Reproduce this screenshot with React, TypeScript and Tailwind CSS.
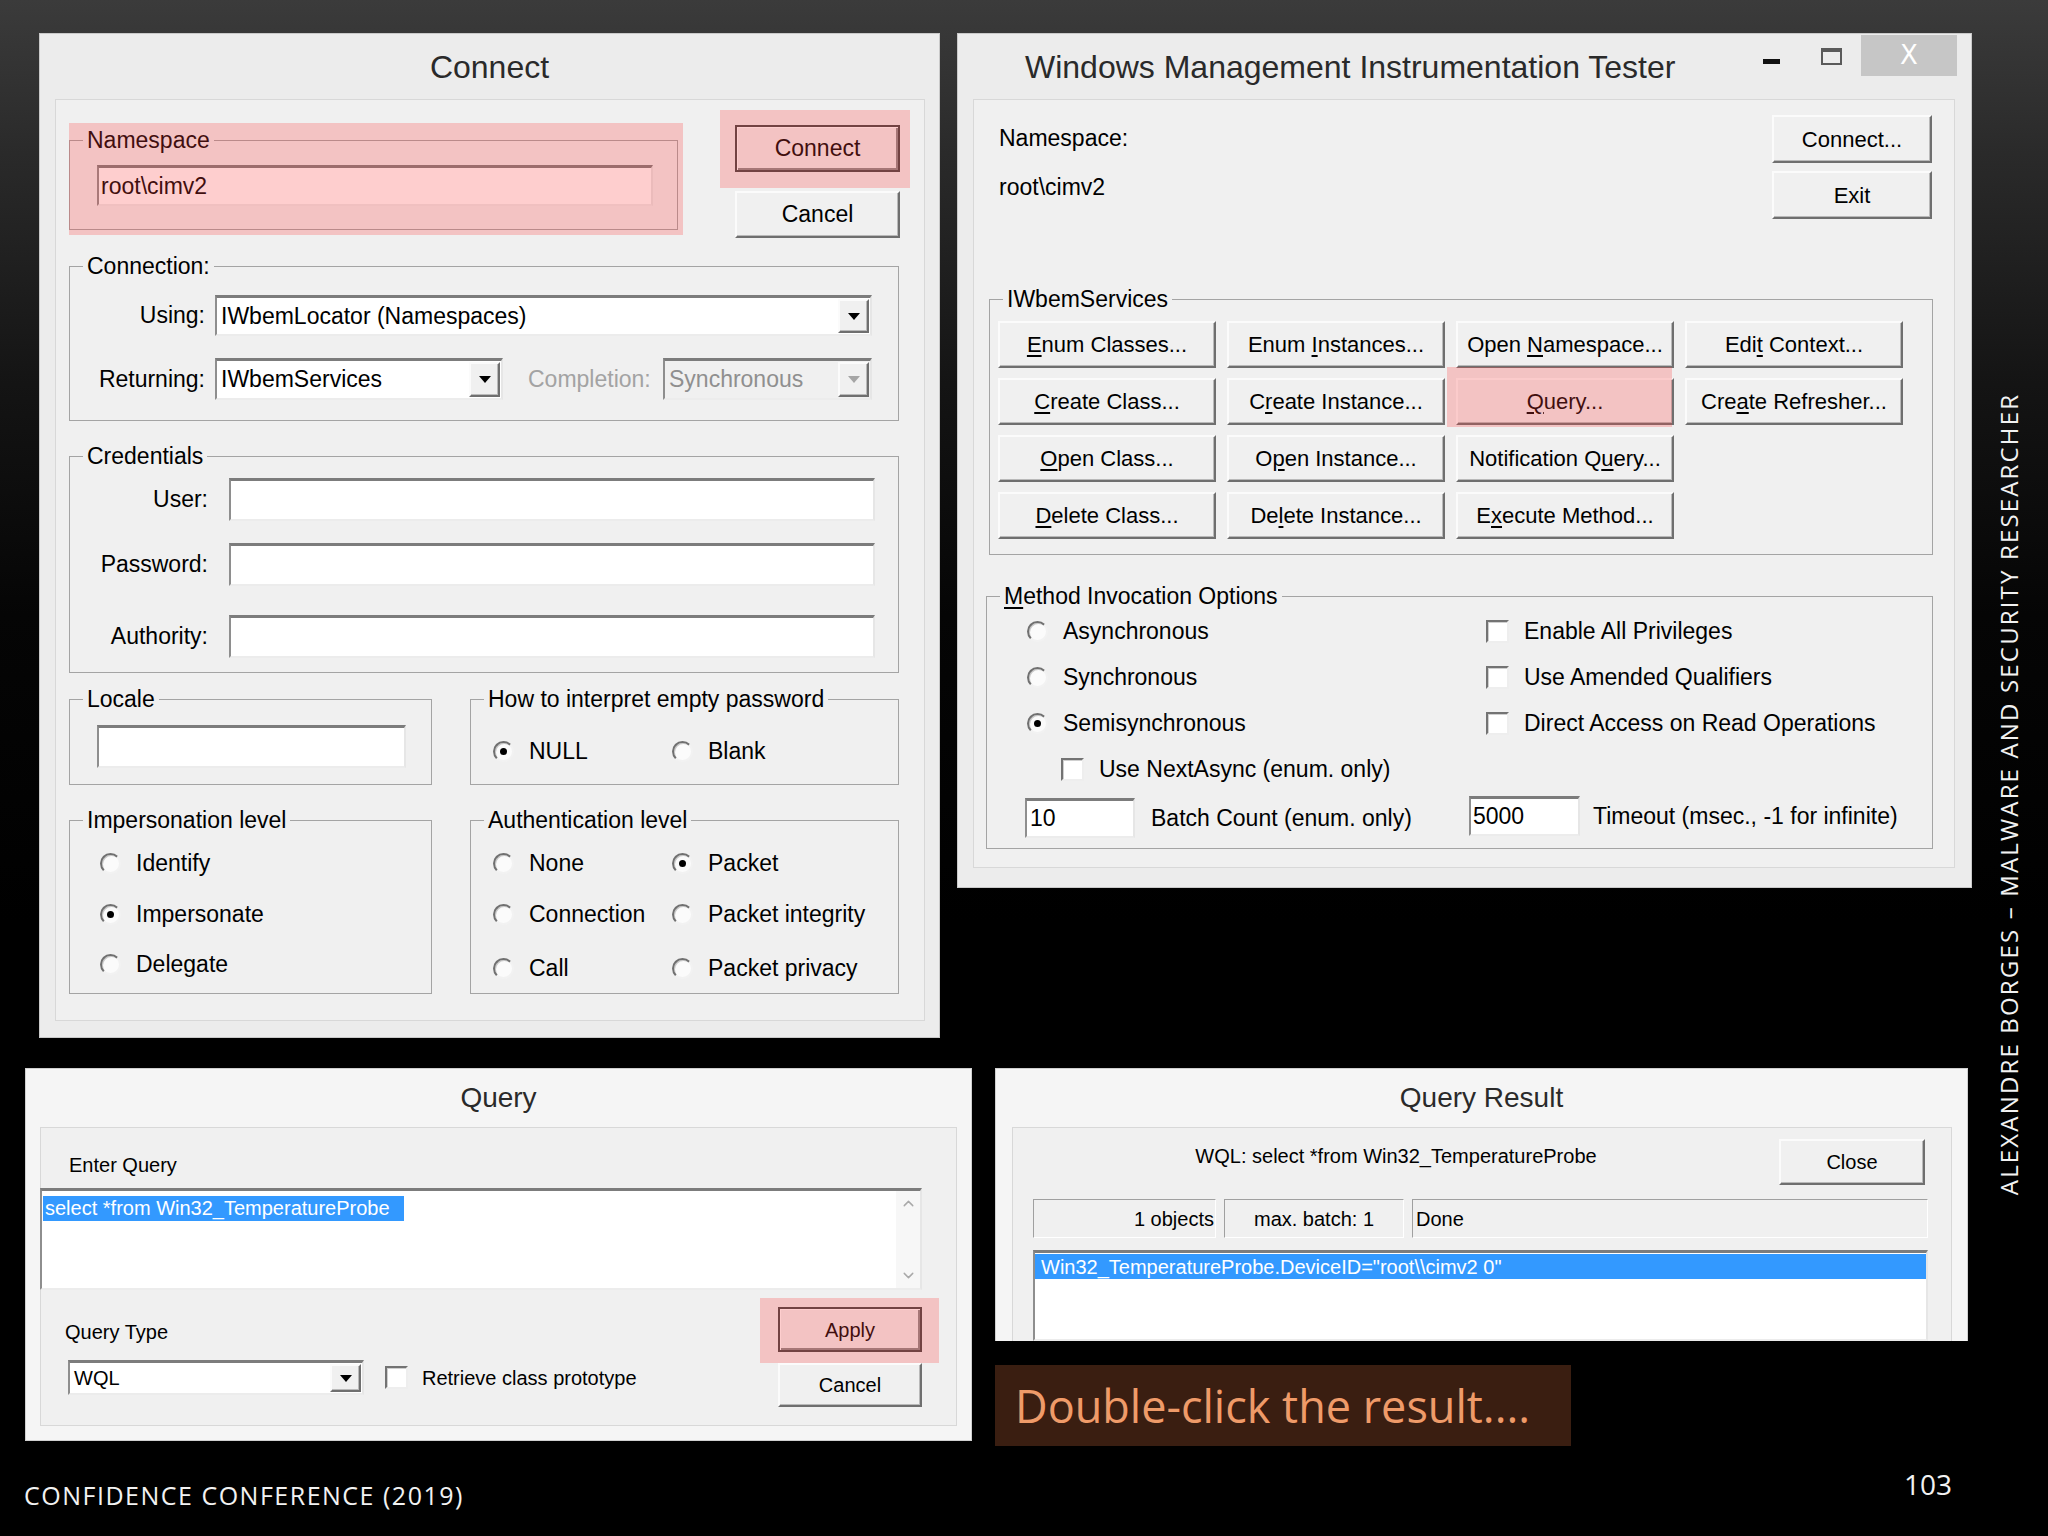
import React from "react";
import { ChevronUp, ChevronDown } from "lucide-react";

type P = { className?: string; children?: React.ReactNode };

function Raised({ className = "", children, def = false }: P & { def?: boolean }) {
  return (
    <div
      className={`flex items-center justify-center bg-[#f0f0f0] border-2 ${
        def
          ? "border-[#444444] shadow-[inset_1px_1px_0_#ffffff,inset_-2px_-2px_0_#8a8a8a]"
          : "border-t-[#fbfbfb] border-l-[#fbfbfb] border-r-[#6f6f6f] border-b-[#6f6f6f] shadow-[inset_-1px_-1px_0_#b9b9b9]"
      } ${className}`}
    >
      {children}
    </div>
  );
}

function Sunken({ className = "", children, bg = "bg-white" }: P & { bg?: string }) {
  return (
    <div
      className={`border-t-[3px] border-l-2 border-r-2 border-b-2 border-t-[#7c7c7c] border-l-[#8e8e8e] border-r-[#e6e6e6] border-b-[#ececec] ${bg} ${className}`}
    >
      {children}
    </div>
  );
}

function Combo({ text, className = "", disabled = false }: { text: string; className?: string; disabled?: boolean }) {
  return (
    <Sunken bg={disabled ? "bg-[#f0f0f0]" : "bg-white"} className={`flex items-stretch ${className}`}>
      <div className={`flex-1 flex items-center pl-[4px] whitespace-nowrap overflow-hidden ${disabled ? "text-[#8f8f8f]" : ""}`}>
        {text}
      </div>
      <Raised className="w-[31px] my-[1px] mr-[1px]">
        <span
          className={`w-0 h-0 border-l-[6px] border-r-[6px] border-t-[7px] border-l-transparent border-r-transparent ${
            disabled ? "border-t-[#a5a5a5]" : "border-t-black"
          }`}
        />
      </Raised>
    </Sunken>
  );
}

function Group({ label, className = "", children }: P & { label: React.ReactNode }) {
  return (
    <fieldset className={`border border-[#a4a4a4] min-w-0 ${className}`}>
      <legend className="ml-[13px] px-[4px] leading-[26px]">{label}</legend>
      {children}
    </fieldset>
  );
}

function Radio({ checked = false }: { checked?: boolean }) {
  return (
    <span className="flex w-[21px] h-[21px] -ml-[1px] shrink-0 items-center justify-center rounded-full bg-[#fbfbfb] border-2 border-t-[#707070] border-l-[#707070] border-r-[#f2f2f2] border-b-[#f2f2f2] shadow-[inset_1px_1px_0_#c9c9c9]">
      {checked ? <span className="w-[7px] h-[7px] rounded-full bg-black" /> : null}
    </span>
  );
}

function Check() {
  return (
    <span className="block w-[23px] h-[23px] -my-[1px] shrink-0 bg-white border-2 border-t-[#737373] border-l-[#737373] border-r-[#eeeeee] border-b-[#eeeeee] shadow-[inset_1px_1px_0_#cfcfcf]" />
  );
}

function RItem({ label, checked = false }: { label: string; checked?: boolean }) {
  return (
    <div className="flex items-center h-[26px] whitespace-nowrap">
      <Radio checked={checked} />
      <span className="ml-[15px]">{label}</span>
    </div>
  );
}

function CItem({ label }: { label: string }) {
  return (
    <div className="flex items-center h-[26px] whitespace-nowrap">
      <Check />
      <span className="ml-[15px]">{label}</span>
    </div>
  );
}

function Hl({ className = "" }: { className?: string }) {
  return <div className={`absolute pointer-events-none bg-[rgba(252,60,60,0.25)] ${className}`} />;
}

function U({ c }: { c: string }) {
  return <span className="underline underline-offset-[3px]">{c}</span>;
}

function ConnectDialog() {
  return (
    <div className="absolute left-[39px] top-[33px] w-[901px] h-[1005px] bg-[#ececec] border border-[#c9c9c9] flex flex-col text-[23px] text-black">
      <div className="h-[65px] shrink-0 flex items-center justify-center text-[32px] text-[#2a2a2a]">Connect</div>
      <div className="ml-[15px] mr-[14px] mb-[16px] flex-1 bg-[#f0f0f0] border border-[#d8d8d8] pl-[13px] pt-[10px] flex flex-col">
        <div className="flex items-start">
          <div className="relative mt-[17px] w-[609px]">
            <Group label="Namespace" className="h-[103px] w-[609px]">
              <Sunken className="mt-[12px] ml-[27px] w-[556px] h-[41px] flex items-center pl-[2px]">root\cimv2</Sunken>
            </Group>
            <Hl className="-top-[4px] left-0 -right-[5px] -bottom-[5px]" />
          </div>
          <div className="ml-[57px] mt-[15px] flex flex-col">
            <div className="relative">
              <Raised def className="w-[165px] h-[47px]">Connect</Raised>
              <Hl className="-top-[15px] -left-[15px] -right-[10px] -bottom-[16px]" />
            </div>
            <Raised className="mt-[19px] w-[165px] h-[47px]">Cancel</Raised>
          </div>
        </div>

        <Group label="Connection:" className="mt-[15px] w-[830px] h-[168px]">
          <div className="mt-[16px] flex items-center">
            <div className="w-[135px] text-right">Using:</div>
            <Combo className="ml-[10px] w-[657px] h-[41px]" text="IWbemLocator (Namespaces)" />
          </div>
          <div className="mt-[22px] flex items-center">
            <div className="w-[135px] text-right">Returning:</div>
            <Combo className="ml-[10px] w-[288px] h-[42px]" text="IWbemServices" />
            <div className="ml-[25px] w-[135px] text-[#a3a3a3] whitespace-nowrap">Completion:</div>
            <Combo disabled className="w-[209px] h-[42px]" text="Synchronous" />
          </div>
        </Group>

        <Group label="Credentials" className="mt-[22px] w-[830px] h-[230px]">
          <div className="mt-[9px] flex items-center">
            <div className="w-[138px] text-right">User:</div>
            <Sunken className="ml-[21px] w-[646px] h-[43px]" />
          </div>
          <div className="mt-[22px] flex items-center">
            <div className="w-[138px] text-right">Password:</div>
            <Sunken className="ml-[21px] w-[646px] h-[43px]" />
          </div>
          <div className="mt-[29px] flex items-center">
            <div className="w-[138px] text-right">Authority:</div>
            <Sunken className="ml-[21px] w-[646px] h-[43px]" />
          </div>
        </Group>

        <div className="mt-[13px] flex gap-[38px]">
          <Group label="Locale" className="w-[363px] h-[99px]">
            <Sunken className="mt-[13px] ml-[27px] w-[309px] h-[43px]" />
          </Group>
          <Group label="How to interpret empty password" className="w-[429px] h-[99px]">
            <div className="mt-[26px] ml-[23px] grid grid-cols-[179px_auto]">
              <RItem label="NULL" checked />
              <RItem label="Blank" />
            </div>
          </Group>
        </div>

        <div className="mt-[22px] flex gap-[38px]">
          <Group label="Impersonation level" className="w-[363px] h-[187px]">
            <div className="mt-[17px] ml-[31px] flex flex-col">
              <RItem label="Identify" />
              <div className="mt-[25px]">
                <RItem label="Impersonate" checked />
              </div>
              <div className="mt-[24px]">
                <RItem label="Delegate" />
              </div>
            </div>
          </Group>
          <Group label="Authentication level" className="w-[429px] h-[187px]">
            <div className="mt-[17px] ml-[23px] flex flex-col">
              <div className="grid grid-cols-[179px_auto]">
                <RItem label="None" />
                <RItem label="Packet" checked />
              </div>
              <div className="mt-[25px] grid grid-cols-[139px_auto]">
                <RItem label="Connection" />
                <div className="ml-[40px]">
                  <RItem label="Packet integrity" />
                </div>
              </div>
              <div className="mt-[28px] grid grid-cols-[179px_auto]">
                <RItem label="Call" />
                <RItem label="Packet privacy" />
              </div>
            </div>
          </Group>
        </div>
      </div>
    </div>
  );
}

function WmiDialog() {
  const btn = "w-[218px] h-[47px] text-[22px] whitespace-nowrap";
  return (
    <div className="absolute left-[957px] top-[33px] w-[1015px] h-[855px] bg-[#ececec] border border-[#c9c9c9] flex flex-col text-[23px] text-black">
      <div className="h-[65px] shrink-0 flex items-start">
        <div className="self-center pl-[67px] text-[32px] text-[#2a2a2a] whitespace-nowrap">
          Windows Management Instrumentation Tester
        </div>
        <div className="ml-auto mt-[25px] w-[17px] h-[5px] bg-[#111111]" />
        <div className="ml-[41px] mt-[14px] w-[21px] h-[17px] border-2 border-t-[4px] border-[#5a5a5a]" />
        <div className="ml-[19px] mt-[1px] mr-[14px] w-[96px] h-[41px] bg-[#c6c6c6] flex items-center justify-center text-white text-[26px] font-['DejaVu_Sans',sans-serif]">
          X
        </div>
      </div>
      <div className="ml-[15px] mr-[16px] mb-[19px] flex-1 bg-[#f0f0f0] border border-[#d8d8d8] flex flex-col">
        <div className="pt-[15px] flex justify-between">
          <div className="pl-[25px] flex flex-col">
            <div className="mt-[10px] leading-[26px]">Namespace:</div>
            <div className="mt-[23px] leading-[26px]">root\cimv2</div>
          </div>
          <div className="mr-[22px] flex flex-col">
            <Raised className="w-[160px] h-[48px] text-[22px]">Connect...</Raised>
            <Raised className="mt-[8px] w-[160px] h-[48px] text-[22px]">Exit</Raised>
          </div>
        </div>

        <Group label="IWbemServices" className="mt-[67px] ml-[15px] w-[944px] h-[269px]">
          <div className="mt-[9px] ml-[8px] grid grid-cols-[218px_218px_218px_218px] gap-x-[11px] gap-y-[10px]">
            <Raised className={btn}><span><U c="E" />num Classes...</span></Raised>
            <Raised className={btn}><span>Enum <U c="I" />nstances...</span></Raised>
            <Raised className={btn}><span>Open <U c="N" />amespace...</span></Raised>
            <Raised className={btn}><span>Edi<U c="t" /> Context...</span></Raised>
            <Raised className={btn}><span><U c="C" />reate Class...</span></Raised>
            <Raised className={btn}><span>C<U c="r" />eate Instance...</span></Raised>
            <div className="relative">
              <Raised className={btn}><span><U c="Q" />uery...</span></Raised>
              <Hl className="-top-[11px] -left-[9px] right-[2px] -bottom-[2px]" />
            </div>
            <Raised className={btn}><span>Cre<U c="a" />te Refresher...</span></Raised>
            <Raised className={btn}><span><U c="O" />pen Class...</span></Raised>
            <Raised className={btn}><span>O<U c="p" />en Instance...</span></Raised>
            <Raised className={btn}><span>Notification Q<U c="u" />ery...</span></Raised>
            <div />
            <Raised className={btn}><span><U c="D" />elete Class...</span></Raised>
            <Raised className={btn}><span>De<U c="l" />ete Instance...</span></Raised>
            <Raised className={btn}><span>E<U c="x" />ecute Method...</span></Raised>
            <div />
          </div>
        </Group>

        <Group
          label={
            <span>
              <U c="M" />ethod Invocation Options
            </span>
          }
          className="mt-[28px] ml-[12px] w-[947px] h-[266px]"
        >
          <div className="mt-[9px] pl-[41px] flex flex-col gap-[20px]">
            <div className="grid grid-cols-[458px_auto]">
              <RItem label="Asynchronous" />
              <CItem label="Enable All Privileges" />
            </div>
            <div className="grid grid-cols-[458px_auto]">
              <RItem label="Synchronous" />
              <CItem label="Use Amended Qualifiers" />
            </div>
            <div className="grid grid-cols-[458px_auto]">
              <RItem label="Semisynchronous" checked />
              <CItem label="Direct Access on Read Operations" />
            </div>
            <div className="ml-[33px]">
              <CItem label="Use NextAsync (enum. only)" />
            </div>
          </div>
          <div className="mt-[14px] ml-[38px] flex items-start">
            <div className="w-[444px] mt-[2px] flex items-center">
              <Sunken className="w-[110px] h-[40px] flex items-center pl-[3px]">10</Sunken>
              <span className="ml-[16px] whitespace-nowrap">Batch Count (enum. only)</span>
            </div>
            <div className="flex items-center">
              <Sunken className="w-[111px] h-[40px] flex items-center pl-[2px]">5000</Sunken>
              <span className="ml-[13px] whitespace-nowrap">Timeout (msec., -1 for infinite)</span>
            </div>
          </div>
        </Group>
      </div>
    </div>
  );
}

function QueryDialog() {
  return (
    <div className="absolute left-[25px] top-[1068px] w-[947px] h-[373px] bg-[#f5f5f5] border border-[#d0d0d0] flex flex-col text-[20px] text-black">
      <div className="h-[58px] shrink-0 flex items-center justify-center text-[28px] text-[#2a2a2a]">Query</div>
      <div className="mx-[14px] mb-[14px] flex-1 bg-[#f0f0f0] border border-[#d8d8d8] flex flex-col">
        <div className="pt-[25px] pl-[28px] leading-[24px]">Enter Query</div>
        <Sunken className="mt-[11px] -ml-[1px] w-[882px] h-[102px] flex">
          <div className="flex-1 pt-[2px] pl-[1px]">
            <span className="bg-[#3399ff] text-white pl-[2px] pr-[14px] leading-[25px] inline-block">select *from Win32_TemperatureProbe</span>
          </div>
          <div className="w-[24px] bg-[#f7f7f7] flex flex-col items-center justify-between py-[4px]">
            <ChevronUp size={17} strokeWidth={2} className="text-[#a9a9a9]" />
            <ChevronDown size={17} strokeWidth={2} className="text-[#a9a9a9]" />
          </div>
        </Sunken>
        <div className="mt-[8px] flex">
          <div className="pl-[24px] flex flex-col">
            <div className="mt-[22px] leading-[24px]">Query Type</div>
            <div className="mt-[16px] flex items-center">
              <Combo className="ml-[3px] w-[296px] h-[35px]" text="WQL" />
              <div className="ml-[21px] flex items-center">
                <Check />
                <span className="ml-[14px] whitespace-nowrap">Retrieve class prototype</span>
              </div>
            </div>
          </div>
          <div className="ml-auto mr-[34px] flex flex-col">
            <div className="relative mt-[9px]">
              <Raised def className="w-[144px] h-[45px]">Apply</Raised>
              <Hl className="-top-[9px] -left-[18px] -right-[17px] -bottom-[11px]" />
            </div>
            <Raised className="mt-[11px] w-[144px] h-[44px]">Cancel</Raised>
          </div>
        </div>
      </div>
    </div>
  );
}

function ResultDialog() {
  return (
    <div className="absolute left-[995px] top-[1068px] w-[973px] h-[273px] bg-[#f5f5f5] border-t border-l border-r border-[#d0d0d0] flex flex-col text-[20px] text-black overflow-hidden">
      <div className="h-[58px] shrink-0 flex items-center justify-center text-[28px] text-[#2a2a2a]">Query Result</div>
      <div className="ml-[16px] mr-[15px] flex-1 bg-[#f0f0f0] border-t border-l border-r border-[#d8d8d8] flex flex-col">
        <div className="pt-[11px] flex items-start">
          <div className="flex-1 pt-[5px] text-center leading-[24px] whitespace-nowrap">
            WQL: select *from Win32_TemperatureProbe
          </div>
          <Raised className="mr-[26px] w-[146px] h-[46px]">Close</Raised>
        </div>
        <div className="mt-[14px] ml-[20px] flex gap-[8px]">
          <div className="w-[183px] h-[39px] border border-t-[#a0a0a0] border-l-[#a0a0a0] border-r-white border-b-white flex items-center justify-end pr-[1px] whitespace-nowrap">
            1 objects
          </div>
          <div className="w-[180px] h-[39px] border border-t-[#a0a0a0] border-l-[#a0a0a0] border-r-white border-b-white flex items-center justify-center whitespace-nowrap">
            max. batch: 1
          </div>
          <div className="w-[516px] h-[39px] border border-t-[#a0a0a0] border-l-[#a0a0a0] border-r-white border-b-white flex items-center pl-[3px]">
            Done
          </div>
        </div>
        <Sunken className="mt-[12px] ml-[20px] w-[895px] flex-1 border-b-0 pt-[1px]">
          <div className="h-[25px] bg-[#3399ff] text-white pl-[6px] flex items-center whitespace-nowrap">
            Win32_TemperatureProbe.DeviceID="root\\cimv2 0"
          </div>
        </Sunken>
      </div>
    </div>
  );
}

export default function App() {
  return (
    <div className="relative w-[2048px] h-[1536px] overflow-hidden bg-[linear-gradient(180deg,#3b3b3b_0%,#2a2a2a_10%,#141414_25%,#050505_40%,#000000_60%,#000000_100%)] font-['Liberation_Sans',Arial,sans-serif]">
      <ConnectDialog />
      <WmiDialog />
      <QueryDialog />
      <ResultDialog />

      <div className="absolute left-[995px] top-[1365px] w-[576px] h-[81px] bg-[#3a1e11] flex items-center pl-[20px] text-[#ef9b69] text-[45px] font-['Open_Sans',sans-serif] whitespace-nowrap">
        Double-click the result....
      </div>

      <div className="absolute left-[24px] top-[1478px] text-[25px] leading-[34px] tracking-[0.06em] text-[#f2f2f2] font-['Open_Sans',sans-serif] whitespace-nowrap">
        CONFIDENCE CONFERENCE (2019)
      </div>

      <div className="absolute left-[1904px] top-[1465px] text-[28px] leading-[38px] text-[#f2f2f2] font-['Open_Sans',sans-serif]">
        103
      </div>

      <div className="absolute left-[2009px] top-[794px] -translate-x-1/2 -translate-y-1/2 -rotate-90 text-[24px] leading-[30px] tracking-[0.09em] text-[#f2f2f2] font-['Open_Sans',sans-serif] whitespace-nowrap">
        ALEXANDRE BORGES – MALWARE AND SECURITY RESEARCHER
      </div>
    </div>
  );
}
